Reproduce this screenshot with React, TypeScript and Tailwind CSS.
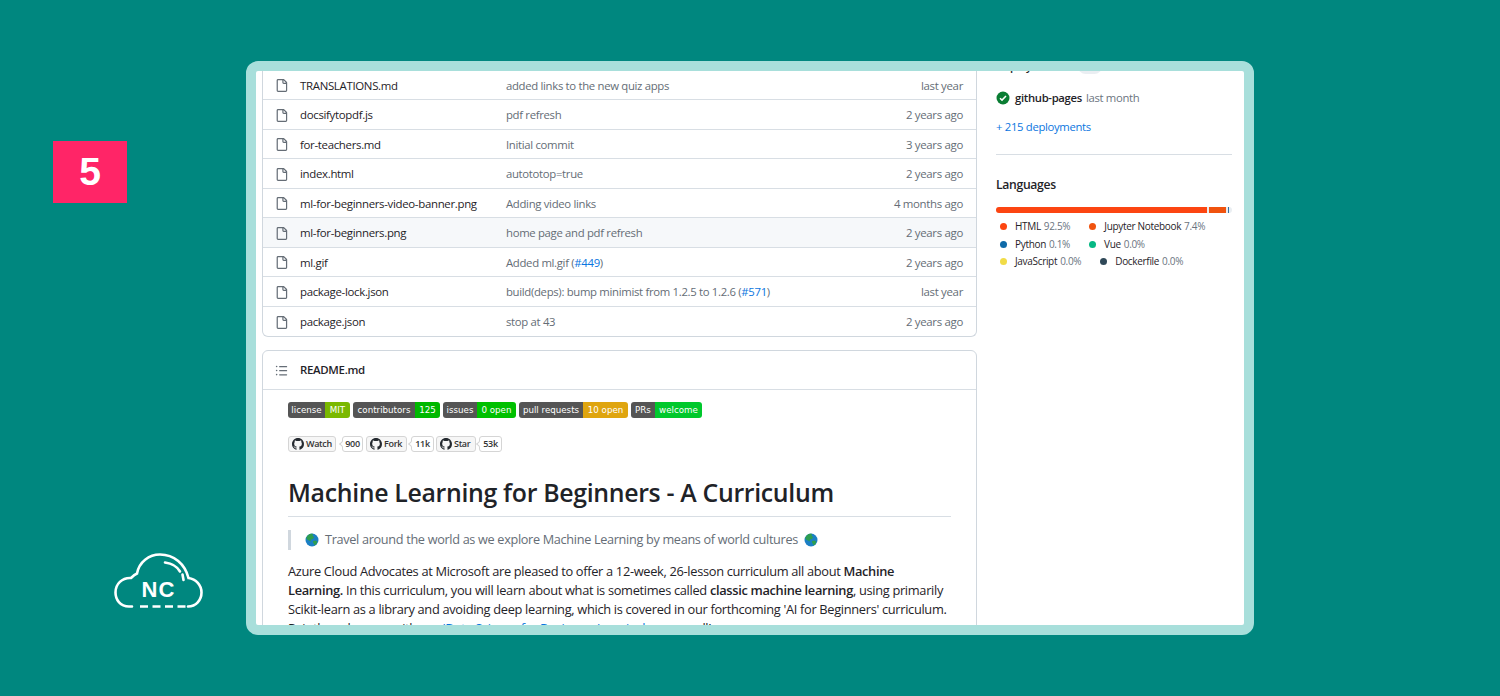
import React from "react";

const FILE = "M2 1.75C2 .784 2.784 0 3.75 0h6.586c.464 0 .909.184 1.237.513l2.914 2.914c.329.328.513.773.513 1.237v9.586A1.75 1.75 0 0 1 13.25 16h-9.5A1.75 1.75 0 0 1 2 14.25Zm1.75-.25a.25.25 0 0 0-.25.25v12.5c0 .138.112.25.25.25h9.5a.25.25 0 0 0 .25-.25V6h-2.75A1.75 1.75 0 0 1 9 4.25V1.5Zm6.75.062V4.25c0 .138.112.25.25.25h2.688l-.011-.013-2.914-2.914-.013-.011Z";
const LIST = "M5.75 2.5h8.5a.75.75 0 0 1 0 1.5h-8.5a.75.75 0 0 1 0-1.5Zm0 5h8.5a.75.75 0 0 1 0 1.5h-8.5a.75.75 0 0 1 0-1.5Zm0 5h8.5a.75.75 0 0 1 0 1.5h-8.5a.75.75 0 0 1 0-1.5ZM2 14a1 1 0 1 1 0-2 1 1 0 0 1 0 2Zm1-6a1 1 0 1 1-2 0 1 1 0 0 1 2 0ZM2 4a1 1 0 1 1 0-2 1 1 0 0 1 0 2Z";
const MARK = "M8 0c4.42 0 8 3.58 8 8a8.013 8.013 0 0 1-5.45 7.59c-.4.08-.55-.17-.55-.38 0-.27.01-1.13.01-2.2 0-.75-.25-1.23-.54-1.48 1.78-.2 3.65-.88 3.65-3.95 0-.88-.31-1.59-.82-2.15.08-.2.36-1.02-.08-2.12 0 0-.67-.22-2.2.82-.64-.18-1.32-.27-2-.27-.68 0-1.36.09-2 .27-1.53-1.03-2.2-.82-2.2-.82-.44 1.1-.16 1.92-.08 2.12-.51.56-.82 1.28-.82 2.15 0 3.06 1.86 3.75 3.64 3.95-.23.2-.44.55-.51 1.07-.46.21-1.61.55-2.33-.66-.15-.24-.6-.83-1.23-.82-.67.01-.27.38.01.53.34.19.73.9.82 1.13.16.45.68 1.31 2.69.94 0 .67.01 1.3.01 1.49 0 .21-.15.45-.55.38A7.995 7.995 0 0 1 0 8c0-4.42 3.58-8 8-8Z";

type Row = { name: string; msg: React.ReactNode; date: string; hover?: boolean };
const Pr = ({ n }: { n: string }) => <span className="text-[#0b76e0]">{n}</span>;
const rows: Row[] = [
  { name: "TRANSLATIONS.md", msg: "added links to the new quiz apps", date: "last year" },
  { name: "docsifytopdf.js", msg: "pdf refresh", date: "2 years ago" },
  { name: "for-teachers.md", msg: "Initial commit", date: "3 years ago" },
  { name: "index.html", msg: "autototop=true", date: "2 years ago" },
  { name: "ml-for-beginners-video-banner.png", msg: "Adding video links", date: "4 months ago" },
  { name: "ml-for-beginners.png", msg: "home page and pdf refresh", date: "2 years ago", hover: true },
  { name: "ml.gif", msg: <>Added ml.gif (<Pr n="#449" />)</>, date: "2 years ago" },
  { name: "package-lock.json", msg: <>build(deps): bump minimist from 1.2.5 to 1.2.6 (<Pr n="#571" />)</>, date: "last year" },
  { name: "package.json", msg: "stop at 43", date: "2 years ago" },
];

const Globe = () => (
  <svg width="14" height="14" viewBox="0 0 14 14" className="inline-block shrink-0">
    <circle cx="7" cy="7" r="6.5" fill="#1b7fc4" />
    <path d="M3 2.2C4.5 1 6.5.6 8 1l-.5 1.6L9 4l-1 2-2 .4-.5 2L4 7.6 2 6.5 1.2 5C1.6 3.8 2.2 3 3 2.2ZM8 8l2.5-.6 1.8 1L11.5 11l-1.8 1.6L9 11 8 9.5Z" fill="#2e9e4f" />
  </svg>
);

const Badge = ({ a, b, aw, bw, color }: { a: string; b: string; aw: number; bw: number; color: string }) => (
  <div className="flex h-4 overflow-hidden rounded-[3px] font-['DejaVu_Sans',sans-serif] text-[8.7px] leading-4 tracking-normal text-white">
    <span className="bg-[#555555] text-center" style={{ width: aw }}>{a}</span>
    <span className="text-center" style={{ width: bw, background: color }}>{b}</span>
  </div>
);

const Social = ({ label, count, w, cw, gap, ml }: { label: string; count: string; w: number; cw: number; gap: number; ml: number }) => (
  <div className="flex items-center" style={{ marginRight: gap }}>
    <div className="flex h-4 items-center gap-[2px] rounded-[3px] border border-[#d5d5d5] bg-[#f6f6f6] pl-[3px] text-[9px] font-semibold text-[#333333]" style={{ width: w }}>
      <svg width="12" height="12" viewBox="0 0 16 16" fill="#24292f" className="shrink-0"><path d={MARK} /></svg>
      <span>{label}</span>
    </div>
    <div className="relative flex h-4 items-center justify-center rounded-[3px] border border-[#d5d5d5] bg-white text-[9px] font-semibold text-[#333333]" style={{ width: cw, marginLeft: ml }}>
      <span className="absolute -left-[3px] top-[5px] h-[4px] w-[4px] rotate-45 border-b border-l border-[#d5d5d5] bg-white" />
      {count}
    </div>
  </div>
);

const Lang = ({ c, n, p }: { c: string; n: string; p: string }) => (
  <div className="flex items-center">
    <span className="mr-2 h-[7px] w-[7px] rounded-full" style={{ background: c }} />
    <span className="font-medium text-[#1f2328]">{n}</span>
    <span className="ml-[3px] text-[#6b7480]">{p}</span>
  </div>
);

export default function App() {
  return (
    <div className="flex h-[696px] w-[1500px] overflow-hidden bg-[#00877f] font-['Open_Sans','Noto_Sans',sans-serif] tracking-[-0.02em]">
      <aside className="flex w-[246px] shrink-0 flex-col pl-[53px] pt-[141px]">
        <div className="flex h-[62px] w-[74px] items-center justify-center bg-[#ff2567] font-['Liberation_Sans',sans-serif] text-[39px] font-bold tracking-normal text-white">5</div>
        <svg width="120" height="80" viewBox="0 0 120 80" fill="none" className="ml-[47px] mt-[338px]">
          <path d="M32 65.5H29C20 65.5 15.5 58.5 15.5 51.5C15.5 43 22 36.5 31 37C33 35 34.5 33.5 37 32.5C39 21 49 13.5 60 13.5C74 13.5 85 23 88.5 37C96 38 101.5 44 101.5 51.5C101.5 59 96 65.5 88 65.5" stroke="#fff" strokeWidth="2.6" strokeLinecap="round" />
          <path d="M40 65.5H88" stroke="#fff" strokeWidth="2.6" strokeDasharray="8 4.5" />
          <path d="M65 21.5C72 22.5 77.5 26 80 30.5" stroke="#fff" strokeWidth="2.6" strokeLinecap="round" />
          <path d="M82.5 33.5L83.5 39" stroke="#fff" strokeWidth="2.6" strokeLinecap="round" />
          <text x="58.5" y="55.5" textAnchor="middle" fill="#fff" fontFamily="Liberation Sans" fontSize="22" fontWeight="700" letterSpacing="1">NC</text>
        </svg>
      </aside>

      <main className="mt-[61px] flex h-[574px] w-[1008px] shrink-0 overflow-hidden rounded-[12px] border-[10px] border-[#a8dfdb] bg-white">
        <section className="ml-[6px] w-[715px] shrink-0">
          <div className="-mt-[0.5px] rounded-b-[6px] border-x border-b border-[#d0d7de]">
            {rows.map((r, i) => (
              <div key={r.name} className={`flex h-[29.5px] items-center pt-[1.5px] text-[11.45px] ${i < rows.length - 1 ? "border-b border-[#d8dee4]" : ""} ${r.hover ? "bg-[#f6f8fa]" : ""}`}>
                <svg width="13" height="13" viewBox="0 0 16 16" fill="#656d76" className="ml-[12px] shrink-0"><path d={FILE} /></svg>
                <span className="ml-[12px] w-[206px] shrink-0 text-[#1f2328]">{r.name}</span>
                <span className="flex-1 text-[11.35px] text-[#656d76]">{r.msg}</span>
                <span className="mr-[13px] text-[#656d76]">{r.date}</span>
              </div>
            ))}
          </div>

          <div className="mt-[13px] h-[400px] rounded-t-[6px] border border-[#d0d7de]">
            <div className="flex h-[39px] items-center border-b border-[#d8dee4] pl-[12px]">
              <svg width="13" height="13" viewBox="0 0 16 16" fill="#656d76"><path d={LIST} /></svg>
              <span className="ml-[12px] text-[11.45px] font-semibold text-[#1f2328]">README.md</span>
            </div>
            <div className="px-[25px] pt-[12px]">
              <div className="flex gap-[3px]">
                <Badge a="license" b="MIT" aw={37} bw={25} color="#7ab800" />
                <Badge a="contributors" b="125" aw={62} bw={25} color="#00b800" />
                <Badge a="issues" b="0 open" aw={34} bw={39} color="#00c000" />
                <Badge a="pull requests" b="10 open" aw={64} bw={45} color="#dfa50f" />
                <Badge a="PRs" b="welcome" aw={24} bw={47} color="#00c82c" />
              </div>
              <div className="mt-[18px] flex">
                <Social label="Watch" count="900" w={48} cw={21} gap={3} ml={6} />
                <Social label="Fork" count="11k" w={41} cw={23} gap={2} ml={4} />
                <Social label="Star" count="53k" w={40} cw={23} gap={0} ml={3} />
              </div>
              <h1 className="mt-[24px] h-[41px] border-b border-[#d8dee4] text-[24.85px] font-semibold leading-[32px] text-[#1f2328]">
                Machine Learning for Beginners - A Curriculum
              </h1>
              <div className="mt-[13px] flex h-5 items-center gap-[6px] border-l-[3px] border-[#d0d7de] pl-[14px] text-[12.7px] text-[#656d76]">
                <Globe />
                <span>Travel around the world as we explore Machine Learning by means of world cultures</span>
                <Globe />
              </div>
              <p className="mt-[12px] whitespace-nowrap text-[12.83px] leading-[19px] text-[#1f2328]">
                Azure Cloud Advocates at Microsoft are pleased to offer a 12-week, 26-lesson curriculum all about <b className="font-semibold">Machine</b><br />
                <b className="font-semibold">Learning.</b> In this curriculum, you will learn about what is sometimes called <b className="font-semibold">classic machine learning</b>, using primarily<br />
                Scikit-learn as a library and avoiding deep learning, which is covered in our forthcoming 'AI for Beginners' curriculum.<br />
                Pair these lessons with our <span className="text-[#0b76e0]">'Data Science for Beginners' curriculum</span>, as well!
              </p>
            </div>
          </div>
        </section>

        <section className="ml-[19px] w-[236px] shrink-0">
          <div className="-mt-[15px] flex h-[20px] items-center text-[11.2px] font-semibold text-[#1f2328]">
            <span className="w-[82px]">Deployments</span>
            <span className="rounded-full bg-[#eaeef2] px-[4px] text-[10px] font-normal">215</span>
          </div>
          <div className="mt-[14px] flex items-center text-[11.3px]">
            <svg width="14" height="14" viewBox="0 0 14 14" className="mr-[5px] shrink-0">
              <circle cx="7" cy="7" r="6.5" fill="#0a7d33" />
              <path d="M4 7.2L6 9.1 10 5" stroke="#fff" strokeWidth="1.5" fill="none" />
            </svg>
            <span className="font-semibold text-[#1f2328]">github-pages</span>
            <span className="ml-[4px] text-[#6b7480]">last month</span>
          </div>
          <div className="mt-[12px] text-[11.3px] leading-[15px] text-[#0b76e0]">+ 215 deployments</div>
          <div className="mt-[20px] border-t border-[#d8dee4]" />
          <div className="mt-[21px] text-[12.2px] font-semibold leading-[18px] text-[#1f2328]">Languages</div>
          <div className="mt-[13px] flex h-[6px] w-[236px] gap-[2px] overflow-hidden rounded-full bg-[#eaeef2]">
            <div className="w-[211px] bg-[#fc4511]" />
            <div className="w-[17px] bg-[#f0530f]" />
            <div className="w-px bg-[#3572a5]" />
          </div>
          <div className="ml-[4px] mt-[7.5px] flex flex-col gap-[5px] text-[10px] leading-[12.5px]">
            <div className="flex gap-[19px]">
              <Lang c="#fc4511" n="HTML" p="92.5%" />
              <Lang c="#f0530f" n="Jupyter Notebook" p="7.4%" />
            </div>
            <div className="flex gap-[19px]">
              <Lang c="#0f6aa8" n="Python" p="0.1%" />
              <Lang c="#06b884" n="Vue" p="0.0%" />
            </div>
            <div className="flex gap-[19px]">
              <Lang c="#f1dc47" n="JavaScript" p="0.0%" />
              <Lang c="#2f4858" n="Dockerfile" p="0.0%" />
            </div>
          </div>
        </section>
      </main>
    </div>
  );
}
